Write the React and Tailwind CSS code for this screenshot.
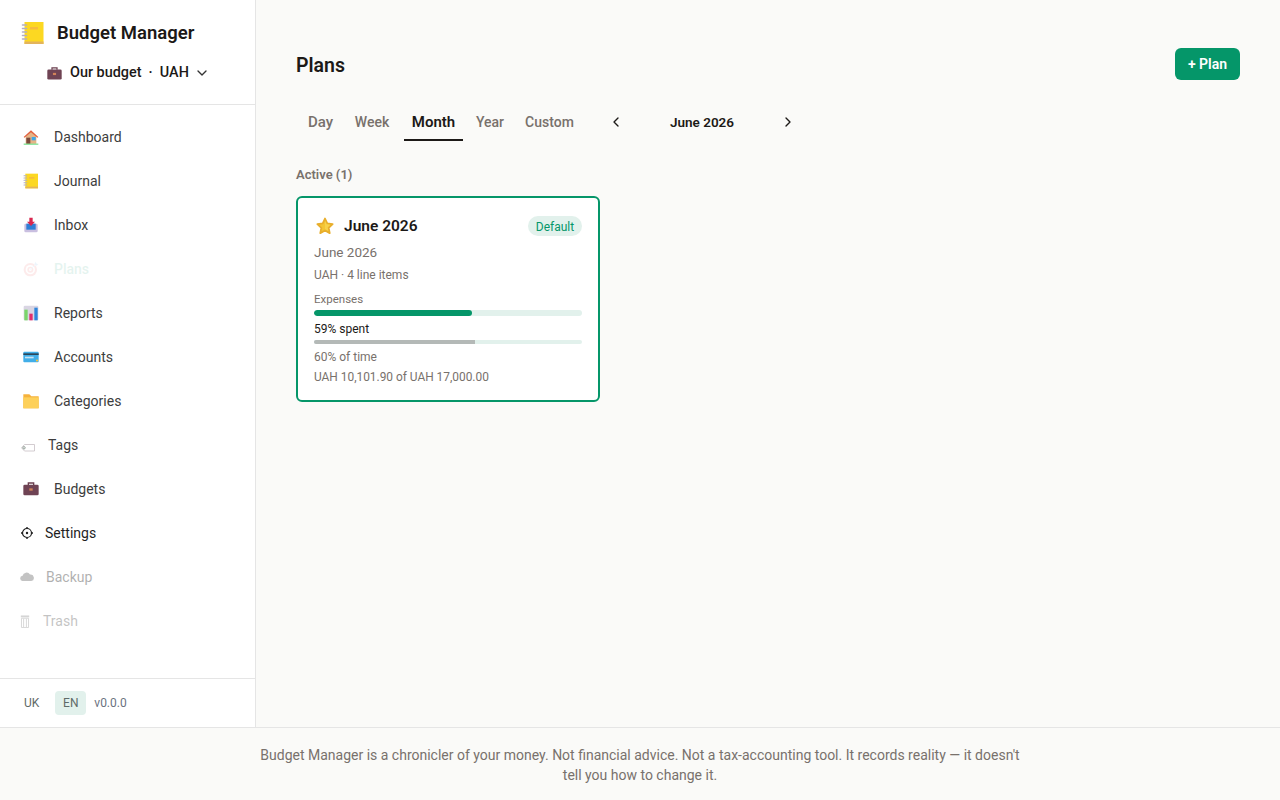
import React from "react";
import { ChevronDown, ChevronLeft, ChevronRight } from "lucide-react";

const Notebook = ({ className }) => (
  <svg viewBox="0 0 24 24" className={className}>
    <rect x="3.5" y="1" width="19" height="22" fill="#fcd822" />
    <rect x="3.5" y="20.5" width="19" height="2.5" fill="#e3b45c" />
    <rect x="9" y="6" width="8" height="2.5" fill="#f6bb3e" />
    <path d="M1.5 4h4M1.5 7.5h4M1.5 11h4M1.5 14.5h4M1.5 18h4" stroke="#b3aec2" strokeWidth="1.6" strokeLinecap="round" fill="none" />
  </svg>
);
const House = ({ className }) => (
  <svg viewBox="0 0 24 24" className={className}>
    <path d="M4 11 12 3l8 8v11H4z" fill="#e6b486" />
    <path d="M1 12 12 2l11 10-1.3 1.2L12 5 2.3 13.2z" fill="#e2603f" />
    <rect x="5" y="13" width="6" height="9" fill="#7a4a3c" />
    <rect x="13" y="12" width="6" height="5" fill="#3ea6e6" />
    <rect x="1" y="22" width="22" height="1.4" fill="#4fd66b" />
  </svg>
);
const Inbox = ({ className }) => (
  <svg viewBox="0 0 24 24" className={className}>
    <rect x="2" y="10" width="20" height="13" rx="2" fill="#c9bfe0" />
    <rect x="5" y="10" width="14" height="9" fill="#2f7fd6" />
    <path d="M9.5 1h5v6h3.5L12 13.5 6 7h3.5z" fill="#d9274f" />
  </svg>
);
const Target = ({ className }) => (
  <svg viewBox="0 0 24 24" className={className}>
    <circle cx="11" cy="13" r="10" fill="#ef4444" />
    <circle cx="11" cy="13" r="7" fill="#ffffff" />
    <circle cx="11" cy="13" r="4.5" fill="#ef4444" />
    <circle cx="11" cy="13" r="2" fill="#ffffff" />
    <path d="M11 13 20 4" stroke="#7cb8e8" strokeWidth="1.5" />
    <path d="M19 1l1 3 3 1-3 2-3-2z" fill="#5aa6e6" />
  </svg>
);
const Chart = ({ className }) => (
  <svg viewBox="0 0 24 24" className={className}>
    <rect x="1" y="1" width="22" height="22" rx="2" fill="#d9d5e3" />
    <rect x="2" y="7" width="5" height="16" fill="#7ad66b" />
    <rect x="9.5" y="13" width="5" height="10" fill="#e22f6d" />
    <rect x="17" y="4" width="5" height="19" fill="#2f86dc" />
  </svg>
);
const Card = ({ className }) => (
  <svg viewBox="0 0 24 24" className={className}>
    <rect x="0.5" y="4" width="23" height="16" rx="1.5" fill="#41aee8" />
    <rect x="0.5" y="6.5" width="23" height="2.5" fill="#2d4658" />
    <rect x="3" y="11.5" width="13" height="2.5" fill="#c9e3f2" />
    <rect x="19.5" y="16" width="3" height="2.5" fill="#f5c23c" />
  </svg>
);
const Folder = ({ className }) => (
  <svg viewBox="0 0 24 24" className={className}>
    <path d="M0.5 2h9l3 3h11v18h-23z" fill="#f6b23c" />
    <rect x="0.5" y="6.5" width="23" height="16.5" fill="#fdd05a" />
  </svg>
);
const Tag = ({ className }) => (
  <svg viewBox="0 0 14 8" className={className}>
    <path d="M3.5.5h10v6.5h-10L.5 3.8z" fill="#fff" stroke="#c8bfc4" strokeWidth="0.8" />
    <circle cx="3" cy="3.8" r="1.2" fill="none" stroke="#7a8a80" strokeWidth="0.8" />
  </svg>
);
const Case = ({ className }) => (
  <svg viewBox="0 0 24 24" className={className}>
    <path d="M8 6V3h8v3" fill="none" stroke="#6b3f4f" strokeWidth="2" />
    <rect x="0.5" y="5.5" width="23" height="16" rx="2" fill="#6f4354" />
    <rect x="9.5" y="11" width="5" height="3.5" fill="#d1835a" />
  </svg>
);
const Gear = ({ className }) => (
  <svg viewBox="0 0 12 12" className={className} fill="none" stroke="#1f1f1f">
    <circle cx="6" cy="6" r="4.5" strokeWidth="1.2" />
    <circle cx="6" cy="6" r="1.2" fill="#1f1f1f" stroke="none" />
    <path d="M6 0v1.6M6 10.4V12M0 6h1.6M10.4 6H12" strokeWidth="1.4" />
  </svg>
);
const Cloud = ({ className }) => (
  <svg viewBox="0 0 14 9" className={className}>
    <path d="M3 9a2.6 2.6 0 0 1-.4-5.2A4 4 0 0 1 10 2.6 3.2 3.2 0 0 1 11.2 9z" fill="#6b6b6b" />
  </svg>
);
const Trash = ({ className }) => (
  <svg viewBox="0 0 10 14" className={className}>
    <rect x="0.5" y="0.5" width="9" height="2" fill="#777" />
    <path d="M1.2 3.5h7.6V13.5H1.2z" fill="none" stroke="#777" />
    <path d="M3.5 4v9M6.5 4v9" stroke="#777" />
  </svg>
);
const Star = ({ className }) => (
  <svg viewBox="0 0 24 24" className={className}>
    <path d="M12 2l3 6.6 7.2.9-5.3 4.9 1.4 7.1L12 18l-6.3 3.5 1.4-7.1L1.8 9.5 9 8.6z" fill="#f4c534" stroke="#e8ae2c" strokeWidth="2.4" strokeLinejoin="round" />
    <path d="M12 4.5l2.2 5 5 .7-3.7 3.4.9 4.9L12 16z" fill="#f8d24a" />
  </svg>
);

const nav = [
  { label: "Dashboard", icon: <House className="w-4 h-4" />, cls: "text-[#3d3d3d]", gap: "gap-[15px]" },
  { label: "Journal", icon: <Notebook className="w-4 h-4" />, cls: "text-[#3d3d3d]", gap: "gap-[15px]" },
  { label: "Inbox", icon: <Inbox className="w-4 h-4" />, cls: "text-[#3d3d3d]", gap: "gap-[15px]" },
  { label: "Plans", icon: <Target className="w-4 h-4" />, cls: "text-[#059669] font-medium opacity-10", gap: "gap-[15px]" },
  { label: "Reports", icon: <Chart className="w-4 h-4" />, cls: "text-[#3d3d3d]", gap: "gap-[15px]" },
  { label: "Accounts", icon: <Card className="w-4 h-4" />, cls: "text-[#3d3d3d]", gap: "gap-[15px]" },
  { label: "Categories", icon: <Folder className="w-4 h-4" />, cls: "text-[#3d3d3d]", gap: "gap-[15px]" },
  { label: "Tags", icon: <Tag className="w-[14px] h-2 mt-[5px]" />, cls: "text-[#3d3d3d] -ml-[2px]", gap: "gap-[13px]" },
  { label: "Budgets", icon: <Case className="w-4 h-4" />, cls: "text-[#3d3d3d]", gap: "gap-[15px]" },
  { label: "Settings", icon: <Gear className="w-3 h-3" />, cls: "text-[#1f1f1f] -ml-[2px]", gap: "gap-3" },
  { label: "Backup", icon: <Cloud className="w-[14px] h-[9px] mb-[2px]" />, cls: "text-[#3d3d3d] opacity-40 -ml-[3px]", gap: "gap-3" },
  { label: "Trash", icon: <Trash className="w-[10px] h-[13px]" />, cls: "text-[#3d3d3d] opacity-30 -ml-[3px]", gap: "gap-[13px]" },
];

export default function App() {
  return (
    <div className="w-[1280px] h-[800px] overflow-hidden flex flex-col bg-[#fafaf8] text-[#1c1917] font-['Roboto',sans-serif]">
      <div className="flex h-[727px]">
        <aside className="w-[256px] shrink-0 bg-white border-r border-[#e5e5e5] flex flex-col">
          <div className="h-[105px] border-b border-[#e5e5e5] pt-[20px] pl-[21px]">
            <div className="flex items-center gap-[12px] h-[26px]">
              <Notebook className="w-6 h-6" />
              <span className="text-[18.5px] font-semibold leading-none">Budget Manager</span>
            </div>
            <div className="flex items-center mt-[15px] ml-[26px] h-[24px]">
              <Case className="w-[15px] h-[15px] mr-[8px]" />
              <span className="text-[14.4px] font-medium">Our budget&nbsp; ·&nbsp; UAH</span>
              <ChevronDown className="w-[16px] h-[16px] ml-[5px] text-[#333]" strokeWidth={2} />
            </div>
          </div>
          <nav className="flex-1 pt-[10px]">
            {nav.map((n) => (
              <div key={n.label} className={`h-[44px] pl-[23px] flex items-center ${n.gap} text-[14px] ${n.cls}`}>
                {n.icon}
                <span>{n.label}</span>
              </div>
            ))}
          </nav>
          <div className="h-[49px] border-t border-[#e5e5e5] flex items-center pl-[16px] text-[12px] text-[#5f6b68]">
            <span className="px-2 py-1">UK</span>
            <span className="ml-[8px] w-[31px] h-[24px] rounded-[4px] bg-[#e2f1ec] flex items-center justify-center">EN</span>
            <span className="ml-[8px] text-[#6b7280]">v0.0.0</span>
          </div>
        </aside>
        <main className="flex-1 pl-[40px] pr-[40px] pt-[48px]">
          <div className="flex items-center justify-between h-[32px]">
            <h1 className="text-[19.5px] font-semibold leading-[34px] pt-[4px]">Plans</h1>
            <button className="h-[32px] w-[65px] rounded-[6px] bg-[#059669] text-white text-[14px] font-semibold flex items-center justify-center">+ Plan</button>
          </div>
          <div className="flex items-center mt-[26px] ml-[4px] h-[35px] text-[14px] font-medium text-[#78716c]">
            <span className="w-[41px] h-[35px] pb-[1px] mr-[5px] flex items-center justify-center border-b-2 border-transparent text-[15px]">Day</span>
            <span className="w-[52px] h-[35px] pb-[1px] mr-[6px] flex items-center justify-center border-b-2 border-transparent">Week</span>
            <span className="w-[59px] h-[35px] pb-[1px] mr-[5px] flex items-center justify-center text-[#1c1917] font-semibold border-b-2 border-[#1c1917] text-[15px]">Month</span>
            <span className="w-[44px] h-[35px] pb-[1px] mr-[5px] flex items-center justify-center border-b-2 border-transparent">Year</span>
            <span className="w-[65px] h-[35px] pb-[1px] flex items-center justify-center border-b-2 border-transparent">Custom</span>
            <ChevronLeft className="ml-[26px] mb-[3px] w-4 h-4 text-[#1c1917]" />
            <span className="w-[156px] mb-[3px] text-center text-[13.5px] font-semibold text-[#1c1917]">June 2026</span>
            <ChevronRight className="mb-[3px] w-4 h-4 text-[#1c1917]" />
          </div>
          <div className="mt-[24px] text-[13px] font-semibold text-[#78716c] leading-[20px]">Active (1)</div>
          <div className="mt-[11px] w-[304px] h-[206px] rounded-[6px] border-2 border-[#059669] bg-white px-[16px] pt-[16px]">
            <div className="flex items-center justify-between h-[24px]">
              <div className="flex items-center">
                <Star className="w-[18px] h-[18px] ml-[2px]" />
                <span className="ml-[10px] pt-[2px] text-[15.5px] font-semibold">June 2026</span>
              </div>
              <span className="h-[20px] w-[54px] pt-[1px] rounded-full bg-[#e2f1ec] text-[#059669] text-[12px] flex items-center justify-center">Default</span>
            </div>
            <div className="mt-[4px] text-[13.5px] leading-[20px] text-[#78716c]">June 2026</div>
            <div className="mt-[5px] text-[12px] leading-[16px] text-[#78716c]">UAH · 4 line items</div>
            <div className="mt-[8px] text-[11.5px] leading-[16px] text-[#78716c]">Expenses</div>
            <div className="mt-[3px] h-[6px] rounded-full bg-[#e2f1ec] overflow-hidden">
              <div className="h-full w-[59%] rounded-full bg-[#059669]" />
            </div>
            <div className="mt-[5px] text-[12px] leading-[16px] text-[#1c1917]">59% spent</div>
            <div className="mt-[3px] h-[4px] rounded-full bg-[#e2f1ec] overflow-hidden">
              <div className="h-full w-[60%] bg-[#b4b9b7]" />
            </div>
            <div className="mt-[5px] text-[12px] leading-[16px] text-[#78716c]">60% of time</div>
            <div className="mt-[4px] text-[11.9px] leading-[16px] text-[#78716c]">UAH 10,101.90 of UAH 17,000.00</div>
          </div>
        </main>
      </div>
      <footer className="h-[73px] border-t border-[#e5e5e5] flex justify-center pt-[17px]">
        <p className="w-[768px] text-center text-[14px] leading-[20px] text-[#78716c]">Budget Manager is a chronicler of your money. Not financial advice. Not a tax-accounting tool. It records reality — it doesn't tell you how to change it.</p>
      </footer>
    </div>
  );
}
